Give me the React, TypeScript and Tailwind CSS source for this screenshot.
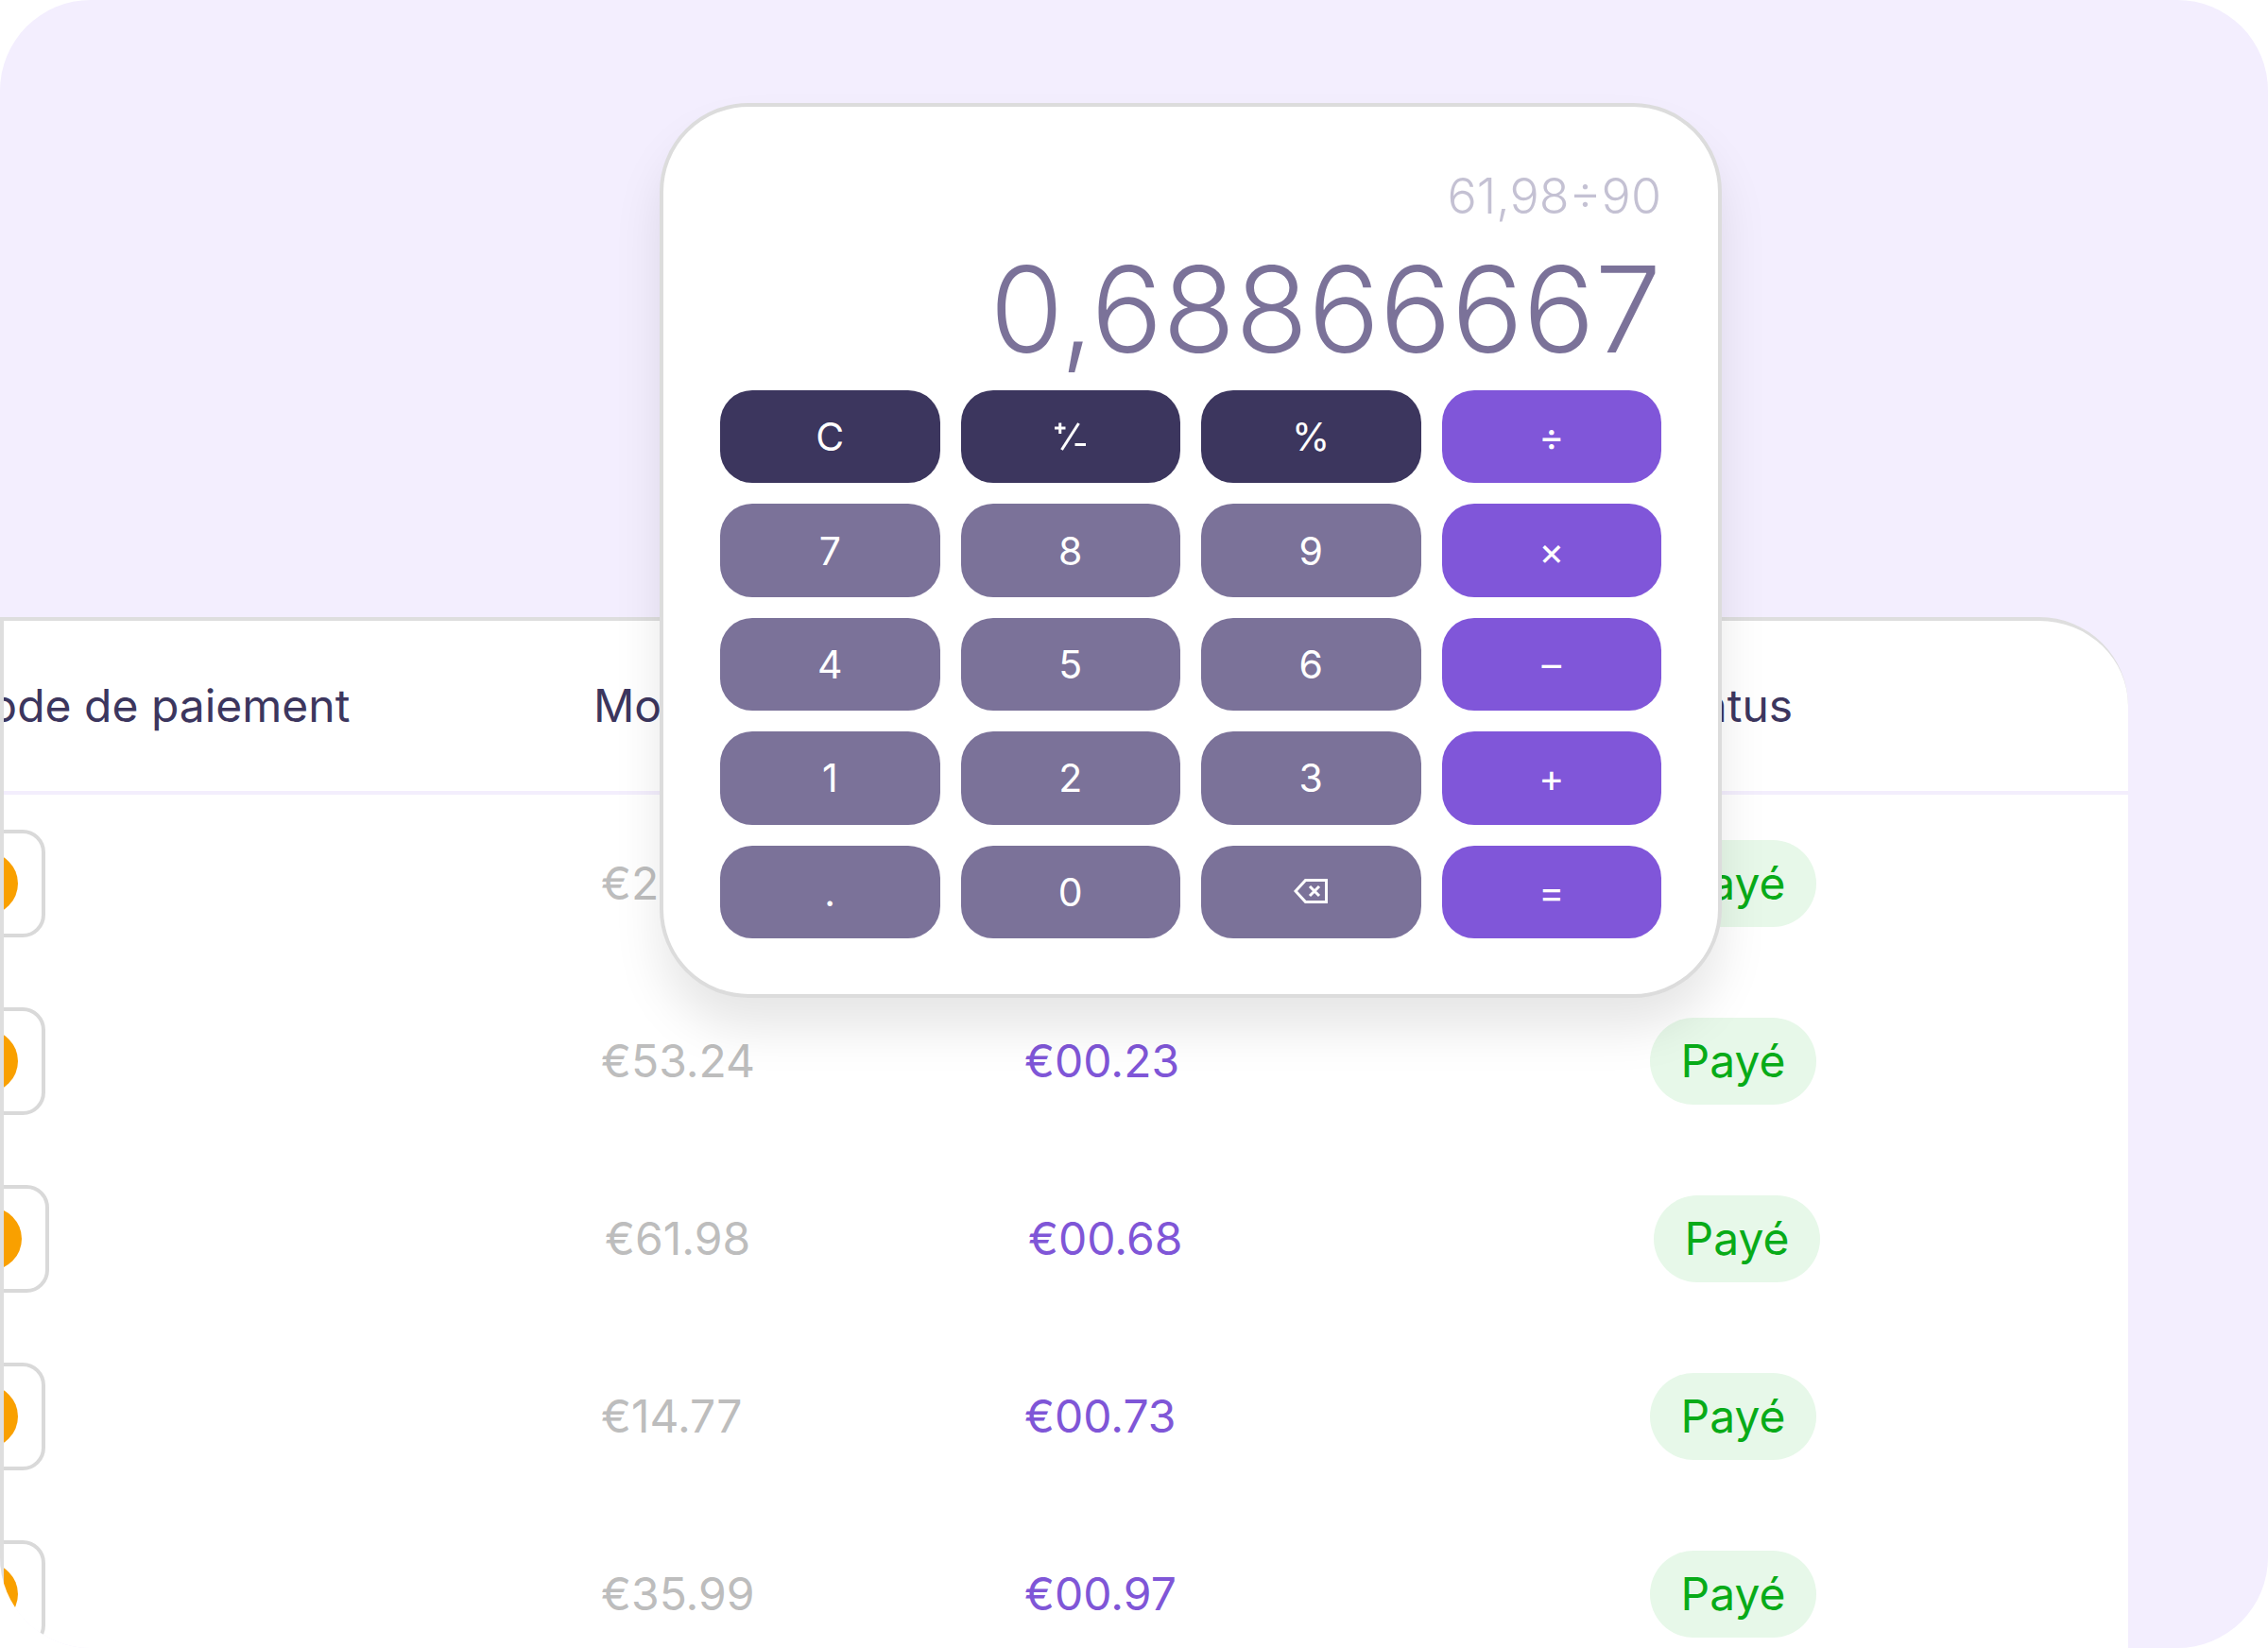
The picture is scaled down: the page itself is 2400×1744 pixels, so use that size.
import type { ReactNode } from "react";

type Payment = {
  amount: string;
  cashback: string;
  active?: boolean;
};

const payments: Payment[] = [
  { amount: "€2", cashback: "" },
  { amount: "€53.24", cashback: "€00.23" },
  { amount: "€61.98", cashback: "€00.68", active: true },
  { amount: "€14.77", cashback: "€00.73" },
  { amount: "€35.99", cashback: "€00.97" },
];

function CardLogo() {
  return (
    <div className="flex h-[114px] w-[152px] items-center justify-center rounded-[24px] border-4 border-[#d9d9d9] bg-white">
      <svg width="94" height="66" viewBox="0 0 94 66" aria-hidden="true">
        <circle cx="33" cy="33" r="33" fill="#eb001b" />
        <circle cx="61" cy="33" r="33" fill="#f9a000" />
      </svg>
    </div>
  );
}

const headCell = "border-b-4 border-[#f3eefd] p-0 font-normal whitespace-nowrap";

function PaymentRow({ amount, cashback, active }: Payment) {
  const outerCell = active ? "p-0 pl-1" : "p-0";
  const valueCell = active ? "p-0 pl-3" : "p-0 pl-2";
  return (
    <tr className="h-[188px]">
      <td className={outerCell}>
        <CardLogo />
      </td>
      <td className={`${valueCell} text-[#bdbdbd]`}>{amount}</td>
      <td className={`${valueCell} text-[#7f56d7]`}>{cashback}</td>
      <td className={outerCell}>
        <span className="flex h-[92px] w-[176px] items-center justify-center rounded-[46px] bg-[#e7f8e9] text-[#08ab18]">
          Payé
        </span>
      </td>
    </tr>
  );
}

function PaymentsTable() {
  return (
    <section className="mr-[148px] overflow-hidden rounded-tr-[94px] border-t-4 border-l-4 border-[#dedede] bg-white">
      <div className="-ml-[108px]">
        <table className="w-full table-fixed border-separate border-spacing-0 text-left text-[48px] leading-[60px]">
          <colgroup>
            <col className="w-[732px]" />
            <col className="w-[448px]" />
            <col className="w-[670px]" />
            <col />
          </colgroup>
          <thead>
            <tr className="h-[184px] text-[#3c365e]">
              <th className={`${headCell} pl-[50px]`}>Mode de paiement</th>
              <th className={headCell}>Montant</th>
              <td className={headCell} />
              <th className={`${headCell} pl-2`}>Status</th>
            </tr>
          </thead>
          <tbody>
            {payments.map((payment) => (
              <PaymentRow key={payment.amount} {...payment} />
            ))}
          </tbody>
        </table>
      </div>
    </section>
  );
}

function PlusMinusIcon() {
  return (
    <svg width="34" height="30" viewBox="0 0 34 30" fill="none" stroke="currentColor" strokeWidth="3" aria-hidden="true">
      <path d="M0 6h11.5M5.75 0.5v11.5M21.5 23.5H33" />
      <path d="M7.5 29L25.5 1" />
    </svg>
  );
}

function BackspaceIcon() {
  return (
    <svg width="36" height="28" viewBox="0 0 36 28" fill="none" stroke="currentColor" strokeWidth="3" aria-hidden="true">
      <path d="M12.5 1.5H34.5V24.5H12.5L2 13Z" />
      <path d="M17 8L27 18M27 8L17 18" />
    </svg>
  );
}

type Tone = "dark" | "muted" | "accent";

const toneClass: Record<Tone, string> = {
  dark: "bg-[#3c365e]",
  muted: "bg-[#7b7299]",
  accent: "bg-[#8056d9]",
};

type Key = { name: string; tone: Tone; face: ReactNode };

const keys: Key[] = [
  { name: "Effacer", tone: "dark", face: "C" },
  { name: "Changer le signe", tone: "dark", face: <PlusMinusIcon /> },
  { name: "Pourcentage", tone: "dark", face: "%" },
  { name: "Diviser", tone: "accent", face: "÷" },
  { name: "7", tone: "muted", face: "7" },
  { name: "8", tone: "muted", face: "8" },
  { name: "9", tone: "muted", face: "9" },
  { name: "Multiplier", tone: "accent", face: "×" },
  { name: "4", tone: "muted", face: "4" },
  { name: "5", tone: "muted", face: "5" },
  { name: "6", tone: "muted", face: "6" },
  { name: "Soustraire", tone: "accent", face: "–" },
  { name: "1", tone: "muted", face: "1" },
  { name: "2", tone: "muted", face: "2" },
  { name: "3", tone: "muted", face: "3" },
  { name: "Additionner", tone: "accent", face: "+" },
  { name: "Virgule", tone: "muted", face: "." },
  { name: "0", tone: "muted", face: "0" },
  { name: "Supprimer", tone: "muted", face: <BackspaceIcon /> },
  { name: "Égal", tone: "accent", face: "=" },
];

function Calculator() {
  return (
    <section
      aria-label="Calculatrice"
      className="absolute top-[109px] left-[698px] w-[1124px] rounded-[94px] border-4 border-[#dcdcdc] bg-white px-[60px] pt-[62px] pb-[59px] shadow-[0_34px_52px_-2px_rgba(0,0,0,0.1)] [font-optical-sizing:none]"
    >
      <div className="flex flex-col items-end">
        <p className="text-[52px] leading-[66px] font-light text-[#c4c1d3]">61,98÷90</p>
        <output className="text-[126px] leading-[172px] font-light text-[#7b7299]">0,68866667</output>
      </div>
      <div className="grid h-[580px] grid-cols-4 grid-rows-5 gap-[22px]">
        {keys.map((key) => (
          <button
            key={key.name}
            type="button"
            aria-label={key.name}
            className={`flex items-center justify-center rounded-[34px] text-[41px] leading-[50px] text-white ${toneClass[key.tone]}`}
          >
            {key.face}
          </button>
        ))}
      </div>
    </section>
  );
}

export default function App() {
  return (
    <main className="relative h-screen overflow-hidden rounded-[96px] bg-[#f3eefe] pt-[653px] font-['Inter',sans-serif]">
      <PaymentsTable />
      <Calculator />
    </main>
  );
}
